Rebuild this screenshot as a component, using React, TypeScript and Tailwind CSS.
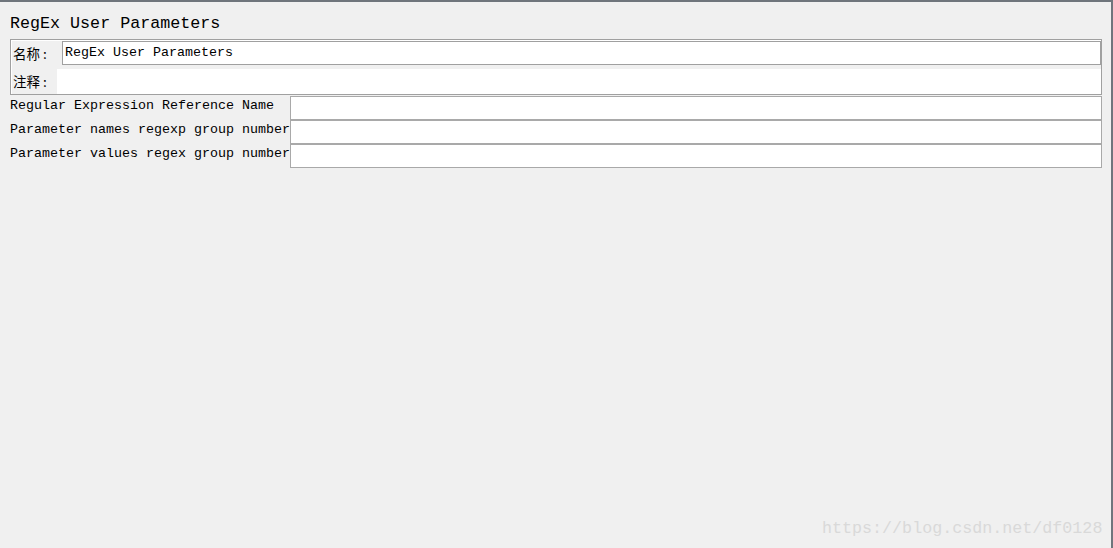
import React from 'react';

const mono = "font-['Liberation_Mono','Noto_Sans_CJK_SC',monospace]";

const ParamRow: React.FC<{ label: string }> = ({ label }) => (
  <div className="flex items-start">
    <div className="w-[280px] text-[13.33px] leading-[20px] whitespace-nowrap">{label}</div>
    <div className="flex-1 h-[24px] border border-[#a9a9a9] bg-white" />
  </div>
);

export default function App() {
  return (
    <div className={`relative w-[1113px] h-[548px] bg-[#f0f0f0] border-t-2 border-r-2 border-[#6f757c] text-black ${mono}`}>
      <div className="pl-[10px] pr-[9px] pt-[10px]">
        {/* title */}
        <div className="h-[24px] text-[16.7px] leading-[24px] whitespace-nowrap">RegEx User Parameters</div>

        {/* name / comment panel */}
        <div className="mt-[3px] border border-[#a0a0a0] shadow-[inset_1px_1px_0_#ffffff] pl-[2px] pt-[1px]">
          <div className="flex items-center">
            <div className="w-[49px] text-[13.5px] leading-[24px] font-['Noto_Sans_CJK_SC',sans-serif]">
              名称<span className="ml-[3px]">:</span>
            </div>
            <div className="flex-1 h-[24px] border border-[#a0a0a0] bg-white pl-[2px] text-[13.33px] leading-[22px] whitespace-nowrap">
              RegEx User Parameters
            </div>
          </div>
          <div className="flex items-center mt-[4px]">
            <div className="w-[44px] text-[13.5px] leading-[25px] font-['Noto_Sans_CJK_SC',sans-serif]">
              注释<span className="ml-[3px]">:</span>
            </div>
            <div className="flex-1 h-[25px] bg-white" />
          </div>
        </div>

        {/* parameter fields */}
        <div className="mt-[1px] flex flex-col">
          <ParamRow label="Regular Expression Reference Name" />
          <ParamRow label="Parameter names regexp group number" />
          <ParamRow label="Parameter values regex group number" />
        </div>
      </div>

      {/* watermark */}
      <div className="absolute left-[822px] top-[514px] text-[16.7px] leading-[25px] text-[#d9d9d9] whitespace-nowrap">
        https://blog.csdn.net/df0128
      </div>
    </div>
  );
}
